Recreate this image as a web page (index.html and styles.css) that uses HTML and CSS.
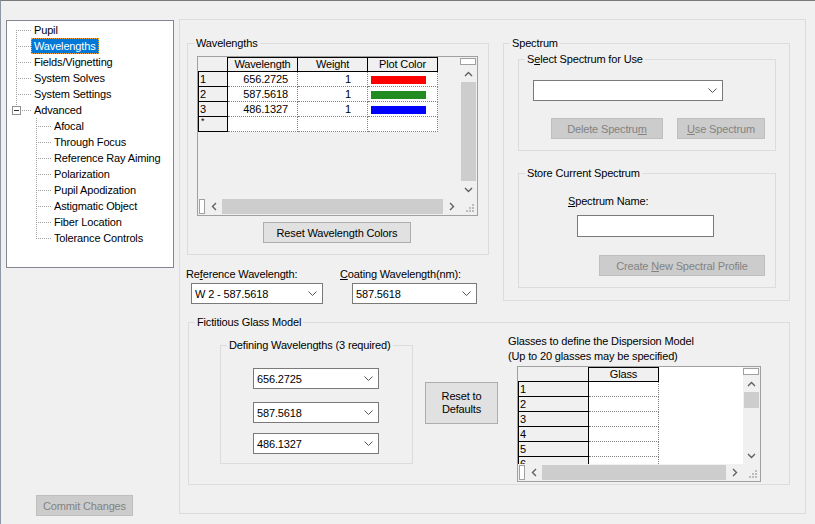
FILE: index.html
```html
<!DOCTYPE html>
<html>
<head>
<meta charset="utf-8">
<title>System Explorer</title>
<link rel="stylesheet" href="styles.css">
</head>
<body>
<div class="window">
  <div class="side">
    <div class="tree">
      <div class="node top first"><span class="guide"></span><span class="label">Pupil</span></div>
      <div class="node top"><span class="guide"></span><span class="label selected">Wavelengths</span></div>
      <div class="node top"><span class="guide"></span><span class="label">Fields/Vignetting</span></div>
      <div class="node top"><span class="guide"></span><span class="label">System Solves</span></div>
      <div class="node top"><span class="guide"></span><span class="label">System Settings</span></div>
      <div class="node top last"><span class="guide"><span class="expander"></span></span><span class="label">Advanced</span></div>
      <div class="node child"><span class="guide"></span><span class="label">Afocal</span></div>
      <div class="node child"><span class="guide"></span><span class="label">Through Focus</span></div>
      <div class="node child"><span class="guide"></span><span class="label">Reference Ray Aiming</span></div>
      <div class="node child"><span class="guide"></span><span class="label">Polarization</span></div>
      <div class="node child"><span class="guide"></span><span class="label">Pupil Apodization</span></div>
      <div class="node child"><span class="guide"></span><span class="label">Astigmatic Object</span></div>
      <div class="node child"><span class="guide"></span><span class="label">Fiber Location</span></div>
      <div class="node child last"><span class="guide"></span><span class="label">Tolerance Controls</span></div>
    </div>
    <button class="btn disabled commit">Commit Changes</button>
  </div>

  <div class="panel">
    <div class="top-row">
      <div class="left-col">
        <div class="group wl-group">
          <div class="legend">Wavelengths</div>
          <div class="grid wl-grid">
            <div class="grid-body">
              <div class="dgv wl-cols">
                <div class="hc corner"></div>
                <div class="hc col">Wavelength</div>
                <div class="hc col">Weight</div>
                <div class="hc col">Plot Color</div>

                <div class="hc rowh">1</div>
                <div class="dc num wl">656.2725</div>
                <div class="dc num wt">1</div>
                <div class="dc"><span class="bar red"></span></div>

                <div class="hc rowh">2</div>
                <div class="dc num wl">587.5618</div>
                <div class="dc num wt">1</div>
                <div class="dc"><span class="bar green"></span></div>

                <div class="hc rowh">3</div>
                <div class="dc num wl">486.1327</div>
                <div class="dc num wt">1</div>
                <div class="dc"><span class="bar blue"></span></div>

                <div class="hc rowh newrow">*</div>
                <div class="dc"></div>
                <div class="dc"></div>
                <div class="dc"></div>
              </div>
            </div>
            <div class="vscroll">
              <div class="vsplit"></div>
              <div class="sbtn"><svg width="9" height="6" viewBox="0 0 9 6"><path d="M1 5 L4.5 1.5 L8 5" fill="none" stroke="#606060" stroke-width="1.4"/></svg></div>
              <div class="vtrack"><div class="vthumb full"></div></div>
              <div class="sbtn"><svg width="9" height="6" viewBox="0 0 9 6"><path d="M1 1 L4.5 4.5 L8 1" fill="none" stroke="#606060" stroke-width="1.4"/></svg></div>
            </div>
            <div class="hscroll">
              <div class="hsplit"></div>
              <div class="sbtn"><svg width="6" height="9" viewBox="0 0 6 9"><path d="M5 1 L1.5 4.5 L5 8" fill="none" stroke="#606060" stroke-width="1.4"/></svg></div>
              <div class="hthumb"></div>
              <div class="sbtn"><svg width="6" height="9" viewBox="0 0 6 9"><path d="M1 1 L4.5 4.5 L1 8" fill="none" stroke="#606060" stroke-width="1.4"/></svg></div>
            </div>
            <div class="grip"><svg width="17" height="17" viewBox="0 0 17 17"><g fill="#bdbdbd"><rect x="12" y="12" width="2" height="2"/><rect x="9" y="12" width="2" height="2"/><rect x="6" y="12" width="2" height="2"/><rect x="12" y="9" width="2" height="2"/><rect x="9" y="9" width="2" height="2"/><rect x="12" y="6" width="2" height="2"/></g></svg></div>
          </div>
          <button class="btn reset-wl">Reset Wavelength Colors</button>
        </div>

        <div class="ref-row">
          <div class="ref-col1">
            <div class="field-label">Re<u>f</u>erence Wavelength:</div>
            <div class="combo"><span>W 2 - 587.5618</span><svg width="9" height="5" viewBox="0 0 9 5"><path d="M0.5 0.5 L4.5 4.5 L8.5 0.5" fill="none" stroke="#555" stroke-width="1"/></svg></div>
          </div>
          <div class="ref-col2">
            <div class="field-label"><u>C</u>oating Wavelength(nm):</div>
            <div class="combo"><span>587.5618</span><svg width="9" height="5" viewBox="0 0 9 5"><path d="M0.5 0.5 L4.5 4.5 L8.5 0.5" fill="none" stroke="#555" stroke-width="1"/></svg></div>
          </div>
        </div>
      </div>

      <div class="right-col">
        <div class="group spec-group">
          <div class="legend">Spectrum</div>
          <div class="group sub select-sub">
            <div class="legend">S<u>e</u>lect Spectrum for Use</div>
            <div class="combo"><span></span><svg width="9" height="5" viewBox="0 0 9 5"><path d="M0.5 0.5 L4.5 4.5 L8.5 0.5" fill="none" stroke="#555" stroke-width="1"/></svg></div>
            <div class="btn-row">
              <button class="btn disabled del-btn">Delete Spectru<u>m</u></button>
              <button class="btn disabled use-btn"><u>U</u>se Spectrum</button>
            </div>
          </div>
          <div class="group sub store-sub">
            <div class="legend">Store Current Spectrum</div>
            <div class="field-label name-label"><u>S</u>pectrum Name:</div>
            <div class="name-input"></div>
            <button class="btn disabled create-btn">Create <u>N</u>ew Spectral Profile</button>
          </div>
        </div>
      </div>
    </div>

    <div class="group fg-group">
      <div class="legend">Fictitious Glass Model</div>
      <div class="fg-row">
        <div class="group def-sub">
          <div class="legend">Defining Wavelengths (3 required)</div>
          <div class="combo c1"><span>656.2725</span><svg width="9" height="5" viewBox="0 0 9 5"><path d="M0.5 0.5 L4.5 4.5 L8.5 0.5" fill="none" stroke="#555" stroke-width="1"/></svg></div>
          <div class="combo c2"><span>587.5618</span><svg width="9" height="5" viewBox="0 0 9 5"><path d="M0.5 0.5 L4.5 4.5 L8.5 0.5" fill="none" stroke="#555" stroke-width="1"/></svg></div>
          <div class="combo c3"><span>486.1327</span><svg width="9" height="5" viewBox="0 0 9 5"><path d="M0.5 0.5 L4.5 4.5 L8.5 0.5" fill="none" stroke="#555" stroke-width="1"/></svg></div>
        </div>
        <button class="btn reset-def">Reset to<br>Defaults</button>
        <div class="glasses">
          <div class="glasses-text">Glasses to define the Dispersion Model<br>(Up to 20 glasses may be specified)</div>
          <div class="grid glass-grid">
            <div class="grid-body">
              <div class="dgv glass-cols">
                <div class="hc corner"></div>
                <div class="hc col">Glass</div>
                <div class="hc rowh">1</div><div class="dc"></div>
                <div class="hc rowh">2</div><div class="dc"></div>
                <div class="hc rowh">3</div><div class="dc"></div>
                <div class="hc rowh">4</div><div class="dc"></div>
                <div class="hc rowh">5</div><div class="dc"></div>
                <div class="hc rowh">6</div><div class="dc"></div>
              </div>
            </div>
            <div class="vscroll">
              <div class="vsplit"></div>
              <div class="sbtn"><svg width="9" height="6" viewBox="0 0 9 6"><path d="M1 5 L4.5 1.5 L8 5" fill="none" stroke="#606060" stroke-width="1.4"/></svg></div>
              <div class="vtrack"><div class="vthumb small"></div></div>
              <div class="sbtn"><svg width="9" height="6" viewBox="0 0 9 6"><path d="M1 1 L4.5 4.5 L8 1" fill="none" stroke="#606060" stroke-width="1.4"/></svg></div>
            </div>
            <div class="hscroll">
              <div class="hsplit"></div>
              <div class="sbtn"><svg width="6" height="9" viewBox="0 0 6 9"><path d="M5 1 L1.5 4.5 L5 8" fill="none" stroke="#606060" stroke-width="1.4"/></svg></div>
              <div class="hthumb"></div>
              <div class="sbtn"><svg width="6" height="9" viewBox="0 0 6 9"><path d="M1 1 L4.5 4.5 L1 8" fill="none" stroke="#606060" stroke-width="1.4"/></svg></div>
            </div>
            <div class="grip"><svg width="17" height="17" viewBox="0 0 17 17"><g fill="#bdbdbd"><rect x="12" y="12" width="2" height="2"/><rect x="9" y="12" width="2" height="2"/><rect x="6" y="12" width="2" height="2"/><rect x="12" y="9" width="2" height="2"/><rect x="9" y="9" width="2" height="2"/><rect x="12" y="6" width="2" height="2"/></g></svg></div>
          </div>
        </div>
      </div>
    </div>
  </div>
</div>
</body>
</html>
```

FILE: styles.css
```css
* { box-sizing: border-box; }
html, body { margin: 0; padding: 0; }
body {
  background: #f0f0f0;
  font-family: "Liberation Sans", Arial, sans-serif;
  font-size: 11px;
  letter-spacing: -0.15px;
  color: #000;
  overflow: hidden;
}
u { text-decoration: underline; text-underline-offset: 1px; }

.window {
  width: 815px;
  height: 524px;
  border-top: 1px solid #7a7a7a;
  border-left: 1px solid #8e98a5;
  display: flex;
  align-items: flex-start;
}

/* ---------- side / tree ---------- */
.side {
  width: 178px;
  height: 523px;
  flex: none;
  display: flex;
  flex-direction: column;
}
.tree {
  width: 168px;
  height: 248px;
  margin: 19px 0 0 5px;
  border: 1px solid #828790;
  background: #fff;
  padding-top: 1px;
}
.node { display: flex; height: 16px; }
.guide {
  flex: none;
  height: 16px;
  display: flex;
  align-items: center;
  background-image:
    repeating-linear-gradient(to bottom, #a0a0a0 0 1px, transparent 1px 2px),
    repeating-linear-gradient(to right, #a0a0a0 0 1px, transparent 1px 2px);
  background-repeat: no-repeat;
}
.node.top .guide {
  width: 24px;
  background-position: 9px 0, 9px 8px;
  background-size: 1px 16px, 15px 1px;
}
.node.top.first .guide {
  background-position: 9px 8px, 9px 8px;
  background-size: 1px 8px, 15px 1px;
}
.node.top.last .guide {
  background-position: 9px 0, 9px 8px;
  background-size: 1px 8px, 15px 1px;
}
.node.child .guide {
  width: 44px;
  background-position: 29px 0, 29px 8px;
  background-size: 1px 16px, 15px 1px;
}
.node.child.last .guide {
  background-size: 1px 8px, 15px 1px;
}
.expander {
  width: 9px;
  height: 9px;
  margin-left: 5px;
  border: 1px solid #919191;
  background: #fff linear-gradient(#333, #333) no-repeat center / 5px 1px;
}
.label {
  height: 16px;
  line-height: 14px;
  padding: 0 2px;
  border: 1px solid transparent;
  white-space: nowrap;
}
.label.selected {
  background: #0078d7;
  color: #fff;
  border: 1px dotted #f7a53b;
}

/* ---------- buttons ---------- */
.btn {
  display: block;
  font: inherit;
  letter-spacing: inherit;
  color: #000;
  margin: 0;
  padding: 0;
  background: #e1e1e1;
  border: 1px solid #adadad;
  white-space: nowrap;
  text-align: center;
}
.btn.disabled {
  background: #cccccc;
  border-color: #bfbfbf;
  color: #838383;
}
.commit { margin: auto 0 8px 35px; width: 97px; height: 21px; }

/* ---------- main panel ---------- */
.panel {
  flex: none;
  width: 627px;
  height: 495px;
  margin-top: 18px;
  border: 1px solid #dcdcdc;
  padding: 23px 0 0 7px;
}
.group { border: 1px solid #dcdcdc; }
.legend {
  margin: -7px 0 0 6px;
  padding: 0 2px;
  height: 13px;
  line-height: 13px;
  width: max-content;
  background: #f0f0f0;
  white-space: nowrap;
}
.field-label { height: 13px; line-height: 13px; white-space: nowrap; }

.top-row { display: flex; align-items: flex-start; }
.left-col { width: 302px; flex: none; }
.wl-group { width: 302px; height: 212px; }
.wl-grid { margin: 6px 0 0 9px; width: 281px; height: 160px; }
.reset-wl { margin: 6px 0 0 75px; width: 148px; height: 21px; }

.ref-row { display: flex; margin: 13px 0 0 -1px; }
.ref-col1 { width: 154px; }
.ref-col1 .combo { margin: 2px 0 0 5px; width: 132px; }
.ref-col2 .combo { margin: 2px 0 0 12px; width: 125px; }

.combo {
  height: 21px;
  border: 1px solid #7a7a7a;
  background: #fff;
  display: flex;
  align-items: center;
  justify-content: space-between;
  padding: 0 5px 0 3px;
  white-space: nowrap;
}
.combo svg { flex: none; }

.right-col { margin-left: 14px; flex: none; }
.spec-group { width: 287px; height: 258px; }
.sub { width: 258px; margin-left: 14px; }
.select-sub { margin-top: 9px; height: 92px; }
.select-sub .combo { margin: 14px 0 0 14px; width: 190px; }
.btn-row { display: flex; margin-top: 17px; }
.del-btn { margin-left: 32px; width: 112px; height: 21px; }
.use-btn { margin-left: 14px; width: 88px; height: 21px; }
.store-sub { margin-top: 22px; height: 115px; }
.name-label { margin: 15px 0 0 49px; }
.name-input {
  margin: 7px 0 0 58px;
  width: 137px;
  height: 22px;
  border: 1px solid #7a7a7a;
  background: #fff;
}
.create-btn { margin: 18px 0 0 80px; width: 166px; height: 21px; }

.fg-group { margin: 18px 0 0 1px; width: 602px; height: 163px; }
.fg-row { display: flex; align-items: flex-start; }
.def-sub { margin: 16px 0 0 31px; width: 193px; height: 119px; flex: none; }
.def-sub .combo { margin-left: 32px; width: 126px; }
.def-sub .c1 { margin-top: 16px; }
.def-sub .c2 { margin-top: 13px; }
.def-sub .c3 { margin-top: 10px; }
.reset-def {
  margin: 53px 0 0 12px;
  width: 73px;
  height: 42px;
  line-height: 13px;
  flex: none;
}
.glasses { margin: 5px 0 0 10px; }
.glasses-text { line-height: 15px; white-space: nowrap; }
.glass-grid { margin: 2px 0 0 9px; width: 244px; height: 116px; }

/* ---------- data grid ---------- */
.grid {
  border: 1px solid #a0a0a0;
  display: grid;
  grid-template-columns: 1fr 17px;
  grid-template-rows: 1fr 17px;
}
.grid-body { overflow: hidden; background: #f0f0f0; min-width: 0; min-height: 0; }
.glass-grid .grid-body { background: #fff; }
.dgv { display: grid; grid-auto-rows: 15px; }
.wl-cols { grid-template-columns: 30px 70px 70px 70px; }
.glass-cols { grid-template-columns: 71px 70px; }

.hc {
  background: #f0f0f0;
  border-right: 1px solid #000;
  border-bottom: 1px solid #000;
  line-height: 14px;
  white-space: nowrap;
  overflow: hidden;
}
.hc.corner { border-color: #f0f0f0 #000 #000 #f0f0f0; }
.hc.col { border-top: 1px solid #000; line-height: 13px; text-align: center; }
.hc.rowh { border-left: 1px solid #000; padding-left: 1px; }
.hc.newrow { font-size: 9px; line-height: 8px; padding-left: 2px; }

.dc {
  background: #fff;
  border-right: 1px dotted #808080;
  border-bottom: 1px dotted #808080;
  line-height: 14px;
  white-space: nowrap;
}
.dc.num { text-align: right; }
.dc.wl { padding-right: 9px; }
.dc.wt { padding-right: 16px; }
.bar { display: block; width: 55px; height: 8px; margin: 4px 0 0 3px; }
.bar.red { background: #ff0000; }
.bar.green { background: #228b22; }
.bar.blue { background: #0000ff; }

/* ---------- scrollbars ---------- */
.vscroll { display: flex; flex-direction: column; background: #f0f0f0; min-height: 0; }
.vsplit {
  flex: none;
  height: 7px;
  margin: 1px 1px 0 0;
  border: 1px solid #a0a0a0;
  background: #fff;
}
.sbtn {
  flex: none;
  height: 17px;
  display: flex;
  align-items: center;
  justify-content: center;
}
.vtrack { flex: 1; display: flex; flex-direction: column; min-height: 0; }
.vthumb { margin: 0 1px; background: #cdcdcd; }
.vthumb.full { flex: 1; }
.vthumb.small { height: 16px; }

.hscroll { display: flex; background: #f0f0f0; min-width: 0; }
.hscroll .sbtn { width: 17px; height: auto; }
.hsplit {
  flex: none;
  width: 6px;
  margin: 1px 0 1px 1px;
  border: 1px solid #a0a0a0;
  background: #fff;
}
.hthumb { flex: 1; margin: 1px 0; background: #cdcdcd; }
.grip { background: #f0f0f0; }
.grip svg { display: block; }
```
